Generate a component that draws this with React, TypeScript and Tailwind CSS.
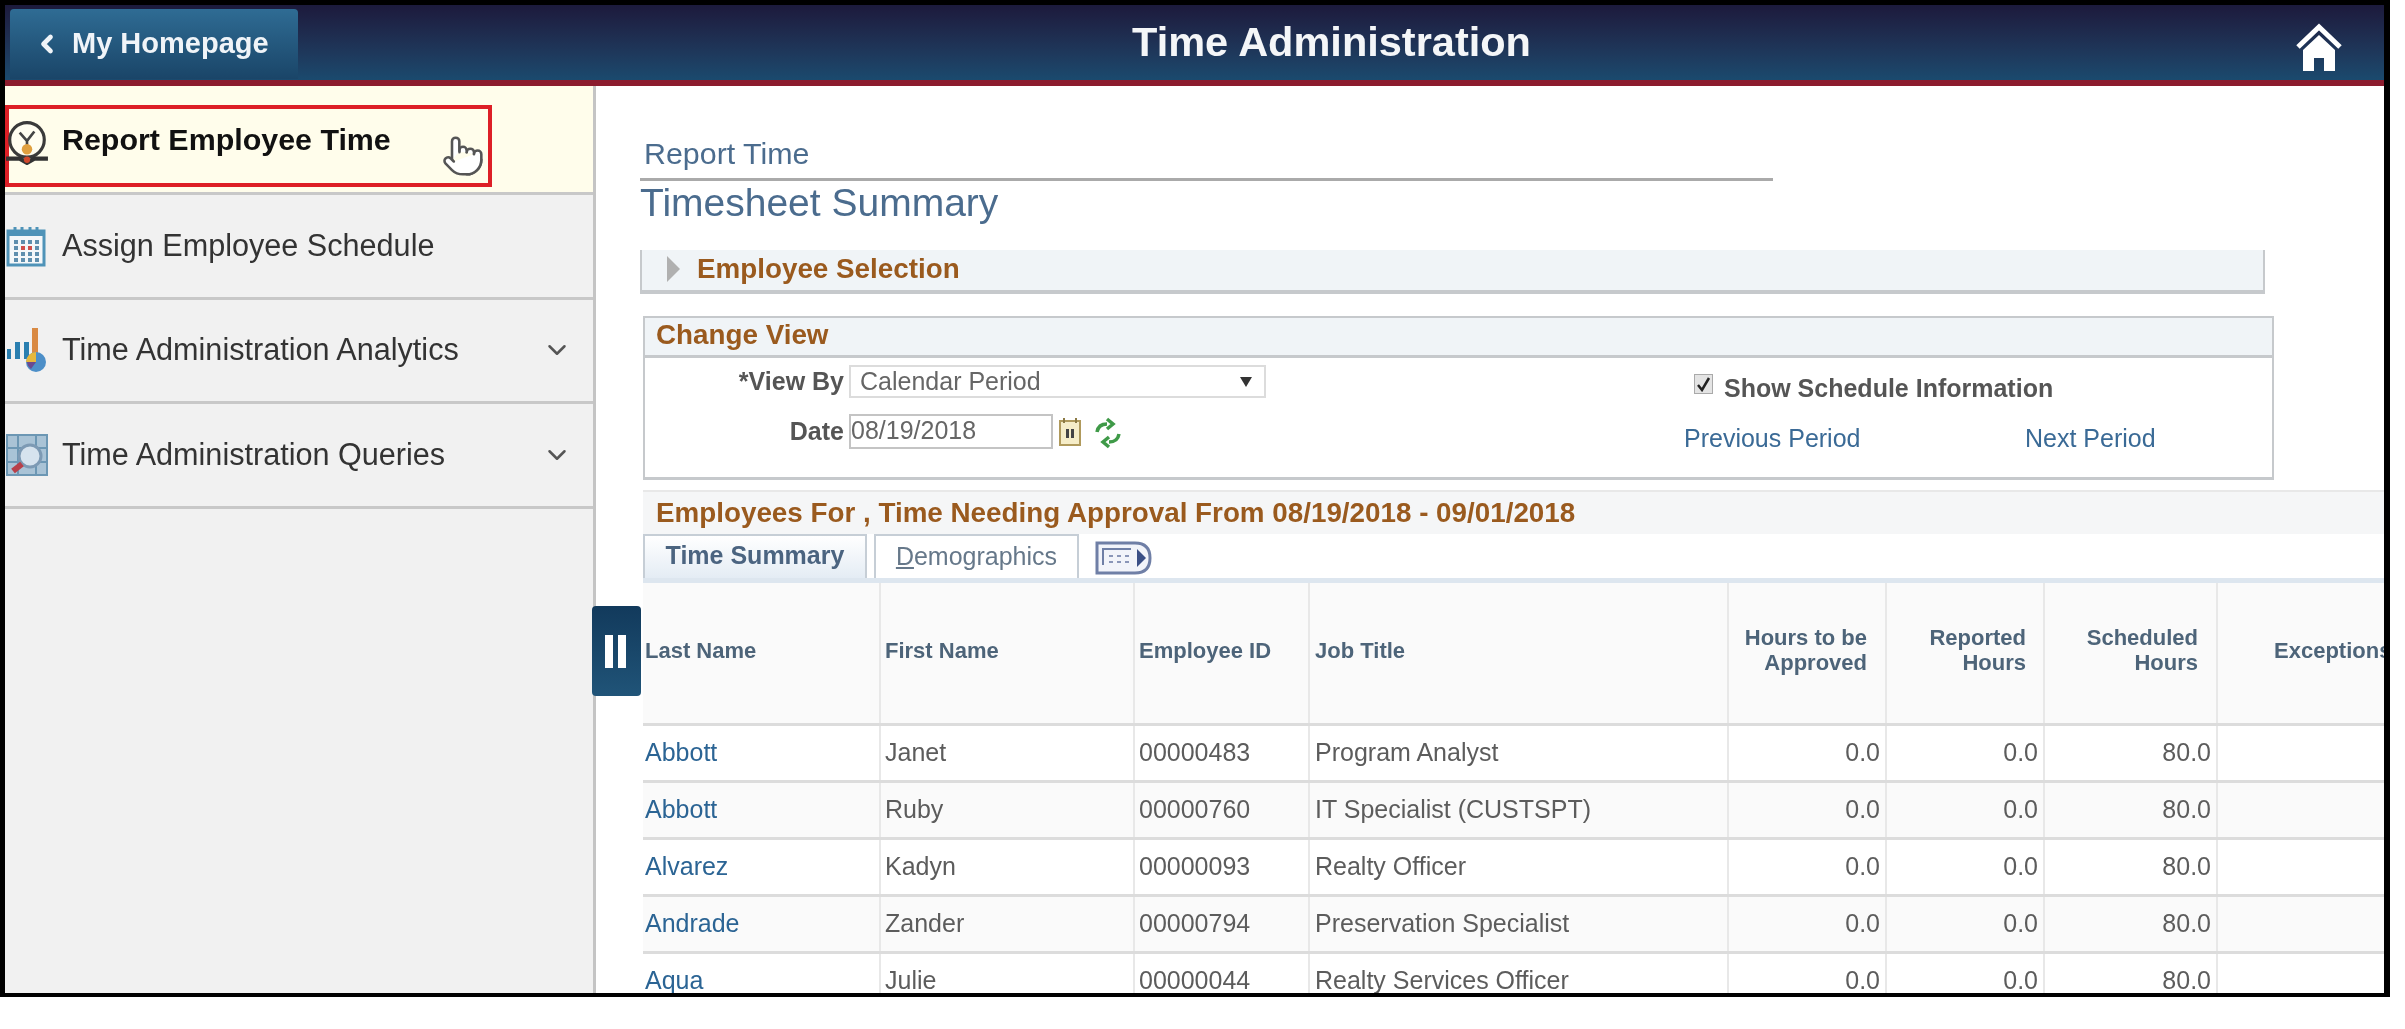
import { ChevronDown, ChevronLeft, Pointer } from 'lucide-react';

const rows = [
  ['Abbott', 'Janet', '00000483', 'Program Analyst'],
  ['Abbott', 'Ruby', '00000760', 'IT Specialist (CUSTSPT)'],
  ['Alvarez', 'Kadyn', '00000093', 'Realty Officer'],
  ['Andrade', 'Zander', '00000794', 'Preservation Specialist'],
  ['Aqua', 'Julie', '00000044', 'Realty Services Officer'],
];

function ClockIcon() {
  return (
    <svg width="44" height="44" viewBox="0 0 42 42" className="shrink-0">
      <circle cx="21" cy="18" r="16.5" fill="#fffdf0" stroke="#3a3a3a" strokeWidth="3" />
      <path d="M14 11l7 8 7-9M21 19v6" fill="none" stroke="#444" strokeWidth="2.5" />
      <circle cx="21" cy="27" r="5" fill="#e0a040" />
      <path d="M1 36h13l7 4 7-4h13" fill="none" stroke="#333" strokeWidth="4" />
      <circle cx="21" cy="37" r="3" fill="#d0482c" />
    </svg>
  );
}

function CalendarIcon() {
  const cells = [0, 1, 2, 3];
  return (
    <svg width="40" height="42" viewBox="0 0 40 42" className="shrink-0">
      <rect x="2" y="6" width="36" height="34" fill="#f4f7f9" stroke="#4f93b8" strokeWidth="3" />
      <rect x="2" y="6" width="36" height="5" fill="#4f93b8" />
      <path d="M9 2v7M16 2v7M24 2v7M31 2v7" stroke="#4f93b8" strokeWidth="3" />
      {cells.map((r) =>
        cells.map((c) => (
          <rect
            key={`${r}-${c}`}
            x={8 + c * 7}
            y={15 + r * 6}
            width="4"
            height="4"
            fill={r === 1 && (c === 1 || c === 2) ? '#d0504c' : '#5f8fae'}
          />
        )),
      )}
    </svg>
  );
}

function ChartIcon() {
  return (
    <svg width="42" height="46" viewBox="0 0 42 46" className="shrink-0">
      <rect x="1" y="22" width="4" height="10" fill="#2a7fb0" />
      <rect x="9" y="15" width="5" height="17" fill="#2a7fb0" />
      <rect x="18" y="15" width="5" height="17" fill="#2a7fb0" />
      <rect x="26" y="1" width="6" height="30" fill="#d98a44" />
      <circle cx="30" cy="35" r="10" fill="#4d8fc8" />
      <path d="M30 35V25a10 10 0 0 0-10 10z" fill="#e6b83c" />
      <path d="M30 35h-9a10 10 0 0 0 4 7z" fill="#6a4a90" />
    </svg>
  );
}

function QueryIcon() {
  return (
    <svg width="42" height="42" viewBox="0 0 42 42" className="shrink-0">
      <rect x="1" y="1" width="40" height="40" fill="#a9c3d6" stroke="#6c97b4" strokeWidth="2" />
      <path d="M1 14h40M1 28h40M12 1v40M30 1v40" stroke="#6c97b4" strokeWidth="2" />
      <circle cx="24" cy="22" r="11" fill="#d6e3ee" stroke="#7d9ab4" strokeWidth="3" />
      <path d="M16 30L7 37" stroke="#b8404a" strokeWidth="6" />
    </svg>
  );
}

function NavRow({ icon, label, chevron }: { icon: React.ReactNode; label: string; chevron?: boolean }) {
  return (
    <div className="flex h-[104.5px] items-center border-b-[3px] border-[#c8c8c8] pr-[21px] text-[30.6px] text-[#333]">
      <div className="flex w-[57px] shrink-0 items-center pl-[1px]">{icon}</div>
      <span className="flex-1">{label}</span>
      {chevron && <ChevronDown size={30} strokeWidth={2} className="text-[#555]" />}
    </div>
  );
}

export default function App() {
  return (
    <div className="h-[1029px] w-[2405px] overflow-hidden bg-white font-['Liberation_Sans',Arial,sans-serif]">
      <div className="flex h-[997px] w-[2390px] flex-col overflow-hidden border-t-[5px] border-r-[6px] border-b-[4px] border-l-[5px] border-black blur-[0.7px]">
        {/* top bar */}
        <header className="relative flex h-[81px] shrink-0 items-center justify-between border-b-[6px] border-[#8c1c2e] bg-gradient-to-b from-[#1c1a3c] to-[#1a4a6e]">
          <div className="ml-[5px] mt-[2px] flex h-[70px] w-[288px] items-center rounded-t-[4px] bg-gradient-to-b from-[#2f6c94] to-[#1a4568] pl-[23px] text-[29px] font-bold text-[#f0f4f8]">
            <ChevronLeft size={28} strokeWidth={4} className="mr-[11px]" />
            <span>My Homepage</span>
          </div>
          <h1 className="absolute left-[0px] right-[0px] top-[12px] pl-[274px] text-center text-[41.5px] leading-[50px] font-bold text-[#f4f6f8]">
            Time Administration
          </h1>
          <svg width="48" height="48" viewBox="0 0 48 48" className="mr-[41px] mt-[8px]">
            <path d="M3 24L24 4l21 20" fill="none" stroke="#fff" strokeWidth="5" />
            <path d="M8 27L24 12l16 15v21H29V35H19v13H8z" fill="#fff" />
          </svg>
        </header>

        <div className="relative flex min-h-0 flex-1">
          {/* side menu */}
          <aside className="w-[591px] shrink-0 border-r-[3px] border-[#c4c4c4] bg-[#f1f1f1]">
            <div className="h-[109px] border-b-[3px] border-[#c8c8c8] bg-[#fffdeb] pt-[19px]">
              <div className="relative flex h-[82px] w-[487px] items-center border-[4px] border-[#dd1f26] pb-[13px] text-[30.4px] font-bold text-[#111]">
                <div className="-ml-[4px] mt-[6px] w-[57px] shrink-0">
                  <ClockIcon />
                </div>
                <span>Report Employee Time</span>
                <Pointer
                  size={44}
                  strokeWidth={1.4}
                  className="absolute left-[432px] top-[25px] fill-white text-[#555]"
                />
              </div>
            </div>
            <NavRow icon={<CalendarIcon />} label="Assign Employee Schedule" />
            <NavRow icon={<ChartIcon />} label="Time Administration Analytics" chevron />
            <NavRow icon={<QueryIcon />} label="Time Administration Queries" chevron />
          </aside>

          {/* pane toggle */}
          <div className="absolute left-[587px] top-[520px] z-10 flex h-[90px] w-[49px] items-center justify-center gap-[5px] rounded-[4px] bg-gradient-to-b from-[#123a5c] to-[#205478] pr-[2px]">
            <div className="h-[33px] w-[8px] bg-white" />
            <div className="h-[33px] w-[8px] bg-white" />
          </div>

          {/* content */}
          <main className="min-w-0 flex-1 overflow-hidden bg-white pl-[44px] pt-[50px]">
            <div className="ml-[4px] h-[42px] text-[30.4px] leading-[34px] text-[#4b6c8e]">Report Time</div>
            <div className="h-[3px] w-[1133px] bg-[#aaaaaa]" />
            <div className="h-[46px] text-[39px] leading-[44px] text-[#4b6c8e]">Timesheet Summary</div>

            <div className="mt-[23px] flex h-[44px] w-[1625px] items-center border-x-[2px] border-b-[4px] border-[#c6c9cc] bg-[#f0f4f7] pb-[3px] pl-[25px] text-[27.8px] font-bold text-[#9a5a1e]">
              <div className="mr-[17px] h-0 w-0 border-y-[13px] border-l-[13px] border-y-transparent border-l-[#b0b0b0]" />
              Employee Selection
            </div>

            <div className="ml-[3px] mt-[22px] h-[164px] w-[1631px] border-x-[2px] border-b-[3px] border-[#c6c9cc]">
              <div className="flex h-[42px] items-center border-b-[3px] border-t-[2px] border-[#c6c9cc] bg-[#f0f4f7] pb-[3px] pl-[11px] text-[27.8px] font-bold text-[#9a5a1e]">
                Change View
              </div>
              <div className="flex">
                <div className="w-[1052px] shrink-0">
                  <div className="mt-[7px] flex h-[33px] items-center">
                    <span className="w-[204px] pr-[5px] text-right text-[25px] font-bold text-[#555]">*View By</span>
                    <div className="flex h-[33px] w-[417px] items-center justify-between border-[2px] border-[#dcdcdc] pl-[9px] pr-[12px] text-[25px] text-[#666]">
                      Calendar Period
                      <div className="h-0 w-0 border-x-[6px] border-t-[10px] border-x-transparent border-t-[#333]" />
                    </div>
                  </div>
                  <div className="mt-[16px] flex h-[35px] items-center">
                    <span className="w-[204px] pr-[5px] text-right text-[25px] font-bold text-[#555]">Date</span>
                    <div className="flex h-[35px] w-[204px] items-center border-[2px] border-[#c4c4c4] pb-[2px] text-[25px] text-[#666]">
                      08/19/2018
                    </div>
                    <svg width="24" height="30" viewBox="0 0 24 30" className="ml-[5px]">
                      <rect x="2" y="4" width="20" height="24" fill="#f6edc8" stroke="#b09a5c" strokeWidth="2" />
                      <path d="M6 1v5M18 1v5" stroke="#8c7a44" strokeWidth="2" />
                      <rect x="8" y="12" width="3" height="9" fill="#444" />
                      <rect x="13" y="12" width="3" height="9" fill="#444" />
                    </svg>
                    <svg width="28" height="32" viewBox="0 0 28 32" className="ml-[12px] mt-[3px]">
                      <path
                        d="M3 15C4 9 8 7 13 7M13 2l6 5-6 5M25 17c-1 6-5 8-10 8M15 30l-6-5 6-5"
                        fill="none"
                        stroke="#3f9a48"
                        strokeWidth="3.5"
                      />
                    </svg>
                  </div>
                </div>
                <div className="pt-[14px]">
                  <div className="flex h-[30px] items-center">
                    <div className="-ml-[3px] mb-[6px] flex h-[20px] w-[19px] items-center justify-center border border-[#aaa] bg-[#e4e4e4]">
                      <svg width="15" height="15" viewBox="0 0 15 15">
                        <path d="M2 8l4 5 7-12" fill="none" stroke="#222" strokeWidth="2.5" />
                      </svg>
                    </div>
                    <span className="ml-[11px] mt-[4px] text-[25px] font-bold text-[#555]">Show Schedule Information</span>
                  </div>
                  <div className="mt-[18px] flex text-[25px] text-[#3a6a96]">
                    <span className="-ml-[13px] w-[341px]">Previous Period</span>
                    <span>Next Period</span>
                  </div>
                </div>
              </div>
            </div>

            <div className="ml-[3px] mt-[10px] flex h-[44px] items-center border-t-[2px] border-[#e8e8e8] bg-[#f5f6f7] pl-[13px] text-[27.8px] font-bold whitespace-nowrap text-[#9a5a1e]">
              Employees For , Time Needing Approval From 08/19/2018 - 09/01/2018
            </div>

            <div className="ml-[3px] flex h-[49px] items-end border-b-[5px] border-[#dde6ef]">
              <div className="flex h-[44px] w-[224px] items-center justify-center border-x-[2px] border-t-[2px] border-[#c6ced6] bg-gradient-to-b from-[#ffffff] to-[#e4ecf4] pb-[2px] text-[25px] font-bold text-[#4b6480]">
                Time Summary
              </div>
              <div className="ml-[7px] flex h-[44px] w-[205px] items-center justify-center border-x-[2px] border-t-[2px] border-[#c6ced6] text-[25px] text-[#66788a]">
                <span>
                  <span className="underline">D</span>emographics
                </span>
              </div>
              <svg width="57" height="34" viewBox="0 0 57 34" className="mb-[3px] ml-[16px]">
                <path d="M2 2h38q15 0 15 15t-15 15H2z" fill="#f2f4fa" stroke="#6f7fa6" strokeWidth="3" />
                <path d="M8 24V8h28" fill="none" stroke="#6f7fa6" strokeWidth="2" />
                <path d="M14 15h4M22 15h4M30 15h4M14 21h4M22 21h4M30 21h4" stroke="#8a96b8" strokeWidth="2" />
                <path d="M42 8l9 9-9 9z" fill="#3a4f86" />
              </svg>
            </div>

            <table className="ml-[3px] w-[1789px] table-fixed border-collapse text-[25px] text-[#5c5c5c]">
              <colgroup>
                <col className="w-[237px]" />
                <col className="w-[254px]" />
                <col className="w-[175px]" />
                <col className="w-[419px]" />
                <col className="w-[158px]" />
                <col className="w-[158px]" />
                <col className="w-[173px]" />
                <col />
              </colgroup>
              <thead>
                <tr className="h-[141px] border-b-[3px] border-[#dcdcdc] bg-[#fafafa] text-[22px] leading-[25px] font-bold text-[#4d6479]">
                  <th className="pb-[5px] pl-[2px] text-left">Last Name</th>
                  <th className="border-l-[2px] border-[#e8e8e8] pb-[5px] pl-[4px] text-left">First Name</th>
                  <th className="border-l-[2px] border-[#e8e8e8] pb-[5px] pl-[4px] text-left">Employee ID</th>
                  <th className="border-l-[2px] border-[#e8e8e8] pb-[5px] pl-[5px] text-left">Job Title</th>
                  <th className="border-l-[2px] border-[#e8e8e8] pr-[18px] pb-[5px] text-right">Hours to be Approved</th>
                  <th className="border-l-[2px] border-[#e8e8e8] pr-[17px] pb-[5px] text-right">Reported Hours</th>
                  <th className="border-l-[2px] border-[#e8e8e8] pr-[18px] pb-[5px] text-right">Scheduled Hours</th>
                  <th className="border-l-[2px] border-[#e8e8e8] pb-[5px] pl-[56px] text-left whitespace-nowrap">Exceptions</th>
                </tr>
              </thead>
              <tbody>
                {rows.map((r, i) => (
                  <tr key={r[2]} className={`h-[57px] border-b-[3px] border-[#dcdcdc] ${i % 2 ? 'bg-[#fafafa]' : 'bg-white'}`}>
                    <td className="pl-[2px] text-[#2b6494]">{r[0]}</td>
                    <td className="border-l-[2px] border-[#e8e8e8] pl-[4px]">{r[1]}</td>
                    <td className="border-l-[2px] border-[#e8e8e8] pl-[4px]">{r[2]}</td>
                    <td className="border-l-[2px] border-[#e8e8e8] pl-[5px]">{r[3]}</td>
                    <td className="border-l-[2px] border-[#e8e8e8] pr-[5px] text-right">0.0</td>
                    <td className="border-l-[2px] border-[#e8e8e8] pr-[5px] text-right">0.0</td>
                    <td className="border-l-[2px] border-[#e8e8e8] pr-[5px] text-right">80.0</td>
                    <td className="border-l-[2px] border-[#e8e8e8]" />
                  </tr>
                ))}
              </tbody>
            </table>
          </main>
        </div>
      </div>
    </div>
  );
}
